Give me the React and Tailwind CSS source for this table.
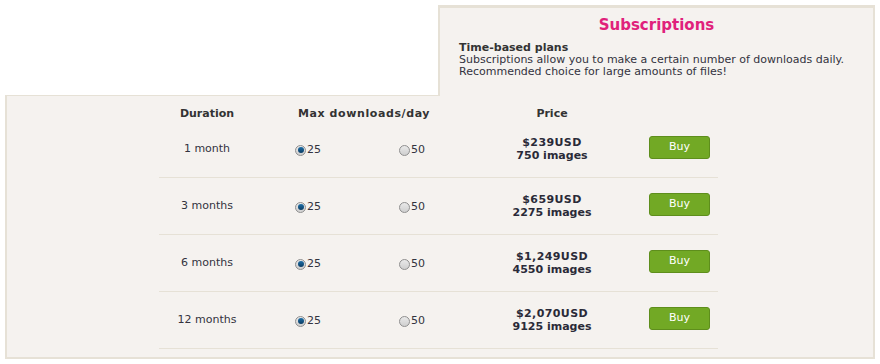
import React from 'react';

const plans = [
    { duration: '1 month', price: '$239USD', images: '750 images' },
    { duration: '3 months', price: '$659USD', images: '2275 images' },
    { duration: '6 months', price: '$1,249USD', images: '4550 images' },
    { duration: '12 months', price: '$2,070USD', images: '9125 images' },
];

// Small radio look-alike, drawn with CSS
const Radio = ({ checked, label }) => (
    <span className="flex items-center">
        <span className="w-[11px] h-[11px] rounded-full border border-[#8f8f8f] bg-gradient-to-b from-[#e9e9e9] to-[#cfcfcf] flex items-center justify-center">
            {checked && <span className="w-[6px] h-[6px] rounded-full bg-gradient-to-b from-[#1d6fa8] to-[#0b3c63]" />}
        </span>
        <span className="ml-px">{label}</span>
    </span>
);

const Row = ({ plan }) => (
    <div className="grid grid-cols-[96px_218px_158px_87px] h-[57px] border-b border-[#e6e1d6] items-center">
        <div className="text-center">{plan.duration}</div>
        <div className="relative h-full">
            <div className="absolute left-[40px] top-[21px]"><Radio checked label="25" /></div>
            <div className="absolute left-[144px] top-[21px]"><Radio label="50" /></div>
        </div>
        <div className="text-center font-bold leading-[13px] text-[#2a2a38]">
            <div className="tracking-[0.4px]">{plan.price}</div>
            <div>{plan.images}</div>
        </div>
        <div className="pl-[18px] -mt-[4px]">
            <button className="w-[61px] h-[23px] rounded-[3px] border border-[#5e8e1c] bg-[#72a925] text-white text-[11px]">Buy</button>
        </div>
    </div>
);

const App = () => {
    return (
        <div className="w-[880px] h-[364px] bg-white pl-[5px] pt-[5px] text-[11px] text-[#333340]" style={{ fontFamily: '"DejaVu Sans", Verdana, sans-serif' }}>
            <div className="w-[870px] flex">
                <div className="w-[433px] border-b border-[#e6e1d6]" />
                <div className="flex-1 h-[91px] bg-[#f5f2ef] border-t-[3px] border-l-2 border-r-2 border-[#e6e1d6]">
                    <h1 className="text-center text-[15px] font-bold text-[#e0217b] mt-[7px] leading-[20px]">Subscriptions</h1>
                    <div className="pl-[19px] mt-[7px] leading-[12px]">
                        <div className="font-bold text-[#333]">Time-based plans</div>
                        <div>Subscriptions allow you to make a certain number of downloads daily.</div>
                        <div>Recommended choice for large amounts of files!</div>
                    </div>
                </div>
            </div>
            <div className="w-[870px] h-[263px] bg-[#f5f2ef] border-l-2 border-r-2 border-b-2 border-[#e6e1d6] pl-[152px] pt-[11px]">
                <div className="grid grid-cols-[96px_218px_158px_87px] h-[14px] items-start font-bold text-[#333] w-[559px] leading-[13px]">
                    <div className="text-center">Duration</div>
                    <div className="text-center tracking-[0.6px]">Max downloads/day</div>
                    <div className="text-center">Price</div>
                    <div />
                </div>
                <div className="w-[559px]">
                    {plans.map(p => <Row key={p.duration} plan={p} />)}
                </div>
            </div>
        </div>
    );
};

export default App;
